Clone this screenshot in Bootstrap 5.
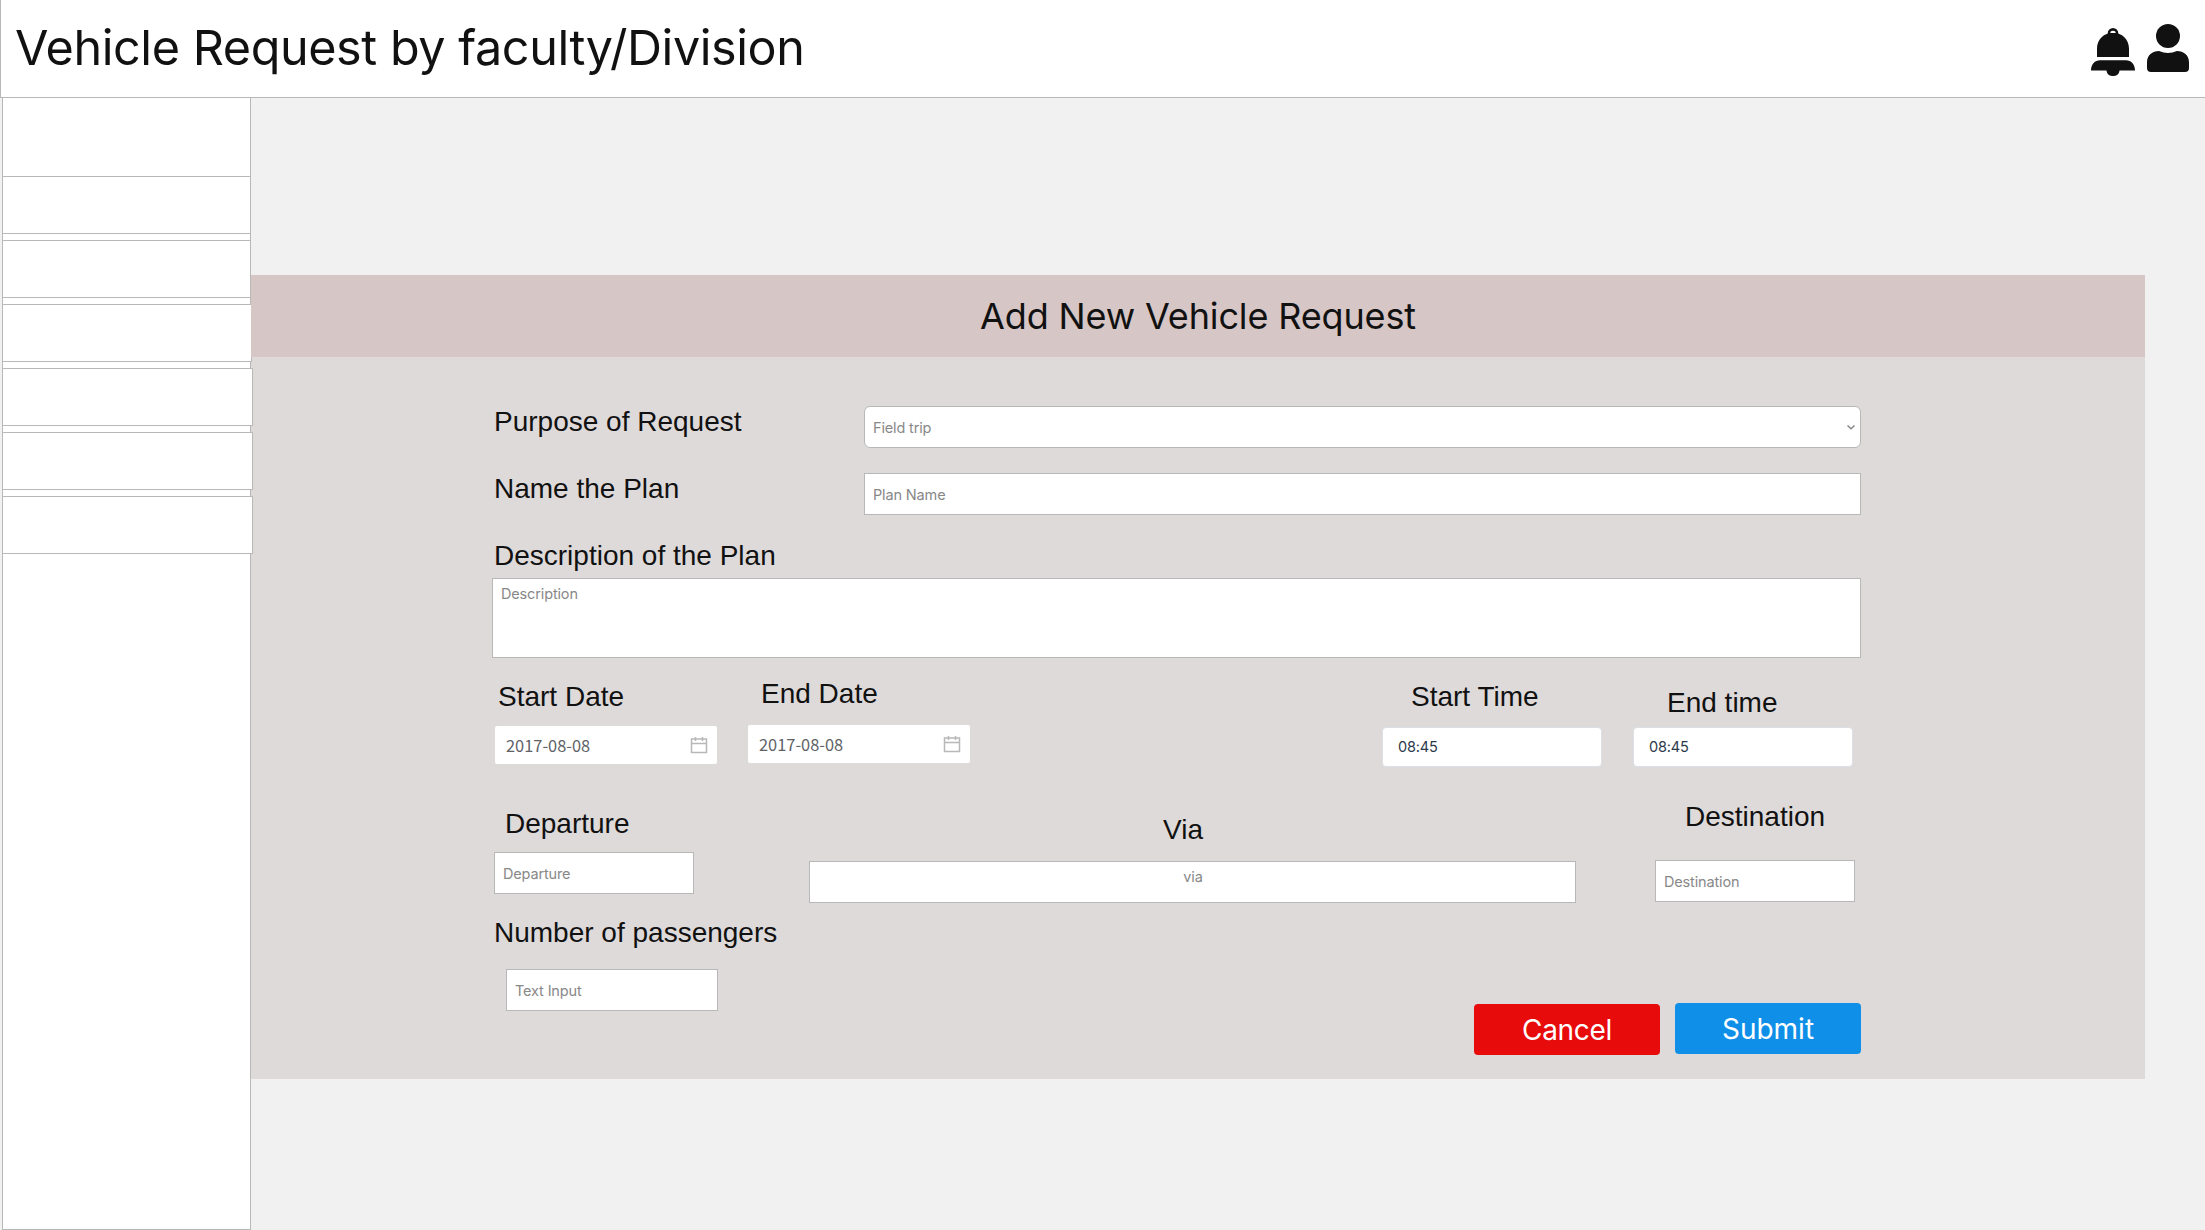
<!DOCTYPE html>
<html lang="en">
<head>
<meta charset="utf-8">
<meta name="viewport" content="width=device-width, initial-scale=1">
<title>Vehicle Request by faculty/Division</title>
<link href="https://cdn.jsdelivr.net/npm/bootstrap@5.3.0/dist/css/bootstrap.min.css" rel="stylesheet">
<style>
  body { background: #f1f1f1; color: #111; font-family: Inter, sans-serif; height: 1230px; overflow: hidden; }
  .topbar { height: 98px; background: #fff; border-left: 1px solid #b8b8b8; border-bottom: 1px solid #b8b8b8; padding: 0 16px 0 14px; }
  .topbar h1 { font-size: 48.5px; line-height: 60px; font-weight: 400; letter-spacing: -.42px; margin: 18px 0 0; white-space: nowrap; }
  .icons { padding-top: 24px; }
  .icon-bell { width: 44px; height: 48px; margin: 4px 12px 0 0; }
  .icon-user { width: 42px; height: 48px; }
  .sidebar { width: 249px; height: 1132px; margin-left: 2px; background: #fff; border: 1px solid #b8b8b8; border-top: 0; z-index: 1; }
  .side-list { padding-top: 78px; margin-left: -1px; display: flex; flex-direction: column; gap: 6px; }
  .side-item { width: 249px; height: 58px; background: #fff; border: 1px solid #b8b8b8; }
  .side-item.step { width: 250px; }
  .side-item.wide { width: 251px; }
  .panel { width: 1894px; height: 804px; margin-top: 177px; background: #dedada; }
  .panel-head { height: 82px; background: #d7c6c6; z-index: 2; }
  .panel-head h2 { font-size: 36px; line-height: 44px; font-weight: 400; letter-spacing: -.15px; margin: 0; }
  .request-form { padding: 49px 284px 0 241px; }
  .lbl { display: block; font: 28px/34px "Liberation Sans", sans-serif; white-space: nowrap; }
  .lbl-side { width: 372px; padding-left: 2px; margin-top: -1px; }
  .request-form .form-control, .request-form .form-select {
    border: 1px solid #b8b8b8; border-radius: 0; height: 42px; padding: 0 8px; background: #fff;
    font: 14.5px/20px Inter, sans-serif; letter-spacing: -.15px; color: #888; }
  .request-form .form-select { border-radius: 6px; padding-top: 1px; }
  .request-form .form-control::placeholder { color: #888; opacity: 1; }
  .request-form textarea.form-control { height: 80px; padding-top: 5px; resize: none; }
  .chevron { right: 6px; top: 18px; width: 8px; height: 7px; }
  .name-row { margin-top: 25px; }
  .desc-row { margin-top: 24px; }
  .desc-row .lbl { margin: 0 0 5px 2px; }
  .when-row { height: 109px; }
  .where-row { height: 136px; }
  .request-form .date-input { width: 222px; height: 38px; border: 0; border-radius: 2px; padding: 0 11px; font: 16.4px/24px "Noto Sans CJK SC", sans-serif; letter-spacing: 0; color: #606266; }
  .request-form .time-input { width: 220px; height: 40px; border: 1px solid #dcdfe6; border-radius: 4px; padding: 0 15px 1px; color: #2c3a4a; }
  .cal { width: 18px; height: 18px; right: 9px; top: 10px; }
  .start-date { margin-left: 3px; padding-top: 22px; }
  .start-date .lbl { margin: 0 0 12px 3px; }
  .end-date { margin-left: 31px; padding-top: 19px; }
  .end-date .lbl { margin: 0 0 14px 13px; }
  .start-time { margin-left: auto; padding-top: 22px; }
  .start-time .lbl { margin: 0 0 13px 29px; }
  .end-time { margin: 0 8px 0 31px; padding-top: 28px; }
  .end-time .lbl { margin: 0 0 7px 34px; }
  .departure { width: 200px; margin-left: 2px; padding-top: 40px; }
  .departure .lbl { margin: 0 0 11px 11px; }
  .via { width: 767px; margin-left: 115px; padding-top: 46px; }
  .via .lbl { margin: 0 0 14px 354px; }
  .request-form .via .form-control { padding: 0 7px 12px 8px; }
  .destination { width: 200px; margin-left: 79px; padding-top: 33px; }
  .destination .lbl { margin: 0 0 26px 30px; }
  .passengers { padding-top: 13px; }
  .passengers .lbl { margin: 0 0 19px 2px; }
  .passengers .form-control { width: 212px; margin-left: 14px; }
  .actions { padding-top: 100px; gap: 15px; }
  .actions .btn { width: 186px; height: 51px; padding: 1px 0 0; border: 0; border-radius: 4px; color: #fff; font: 400 28px/50px Inter, sans-serif; }
  .actions .btn-cancel { background: #e80b0b; margin-top: 1px; letter-spacing: -.3px; }
  .actions .btn-submit { background: #0f8fe8; }
</style>
</head>
<body>
<header class="topbar d-flex justify-content-between align-items-start">
  <h1>Vehicle Request by faculty/Division</h1>
  <div class="icons d-flex align-items-start">
    <svg class="icon-bell" viewBox="0 0 44 48" fill="#111">
      <circle cx="22" cy="5.300" r="5.300"/>
      <path d="M6 29V20.500C6 11.500 13 4.800 22 4.800S38 11.500 38 20.500V29zM0 42.500C0 36 4 32.200 9 32.200H35C40 32.200 44 36 44 42.500H28.600A6.700 6.700 0 0 1 15.400 42.500z"/>
      <path d="M19.300 4.900a2.700 2.200 0 0 1 5.400 0z" fill="#fff"/>
    </svg>
    <svg class="icon-user" viewBox="0 0 42 48" fill="#111">
      <circle cx="21" cy="12" r="12"/>
      <path d="M0 38.500C0 31 5.500 27 12 27Q16.500 29 21 29T30 27C36.500 27 42 31 42 38.500V44Q42 48 38 48H4Q0 48 0 44z"/>
    </svg>
  </div>
</header>
<div class="d-flex align-items-start">
  <aside class="sidebar position-relative flex-shrink-0">
    <div class="side-list">
      <div class="side-item"></div>
      <div class="side-item"></div>
      <div class="side-item step"></div>
      <div class="side-item wide"></div>
      <div class="side-item wide"></div>
      <div class="side-item wide"></div>
    </div>
  </aside>
  <main class="panel flex-shrink-0">
    <div class="panel-head position-relative d-flex align-items-center justify-content-center"><h2>Add New Vehicle Request</h2></div>
    <form class="request-form">
      <div class="d-flex align-items-start">
        <label class="lbl lbl-side" for="purpose">Purpose of Request</label>
        <div class="position-relative flex-grow-1">
          <select class="form-select" id="purpose"><option>Field trip</option></select>
          <svg class="chevron position-absolute" viewBox="0 0 8 7" fill="none" stroke="#888" stroke-width="1.5"><path d="M.5 1.500L4 4.800 7.500 1.500"/></svg>
        </div>
      </div>
      <div class="d-flex align-items-start name-row">
        <label class="lbl lbl-side" for="plan">Name the Plan</label>
        <div class="flex-grow-1"><input class="form-control" id="plan" placeholder="Plan Name"></div>
      </div>
      <div class="desc-row">
        <label class="lbl" for="desc">Description of the Plan</label>
        <textarea class="form-control d-block" id="desc" placeholder="Description"></textarea>
      </div>
      <div class="d-flex align-items-start when-row">
        <div class="start-date">
          <label class="lbl" for="sd">Start Date</label>
          <div class="position-relative">
            <input class="form-control date-input" id="sd" value="2017-08-08">
            <svg class="cal position-absolute" viewBox="0 0 18 18" fill="none" stroke="#b8b8b8" stroke-width="1.5"><path d="M1.500 3h15v13.500h-15zM1.500 7.500h15M5.500 1v4M12.500 1v4"/></svg>
          </div>
        </div>
        <div class="end-date">
          <label class="lbl" for="ed">End Date</label>
          <div class="position-relative">
            <input class="form-control date-input" id="ed" value="2017-08-08">
            <svg class="cal position-absolute" viewBox="0 0 18 18" fill="none" stroke="#b8b8b8" stroke-width="1.5"><path d="M1.500 3h15v13.500h-15zM1.500 7.500h15M5.500 1v4M12.500 1v4"/></svg>
          </div>
        </div>
        <div class="start-time">
          <label class="lbl" for="st">Start Time</label>
          <input class="form-control time-input" id="st" value="08:45">
        </div>
        <div class="end-time">
          <label class="lbl" for="et">End time</label>
          <input class="form-control time-input" id="et" value="08:45">
        </div>
      </div>
      <div class="d-flex align-items-start where-row">
        <div class="departure">
          <label class="lbl" for="dep">Departure</label>
          <input class="form-control" id="dep" placeholder="Departure">
        </div>
        <div class="via">
          <label class="lbl" for="via">Via</label>
          <input class="form-control text-center" id="via" placeholder="via">
        </div>
        <div class="destination">
          <label class="lbl" for="dest">Destination</label>
          <input class="form-control" id="dest" placeholder="Destination">
        </div>
      </div>
      <div class="d-flex align-items-start justify-content-between">
        <div class="passengers">
          <label class="lbl" for="num">Number of passengers</label>
          <input class="form-control" id="num" placeholder="Text Input">
        </div>
        <div class="actions d-flex align-items-start">
          <button type="button" class="btn btn-cancel">Cancel</button>
          <button type="button" class="btn btn-submit">Submit</button>
        </div>
      </div>
    </form>
  </main>
</div>
<script src="https://cdn.jsdelivr.net/npm/bootstrap@5.3.0/dist/js/bootstrap.bundle.min.js"></script>
</body>
</html>
